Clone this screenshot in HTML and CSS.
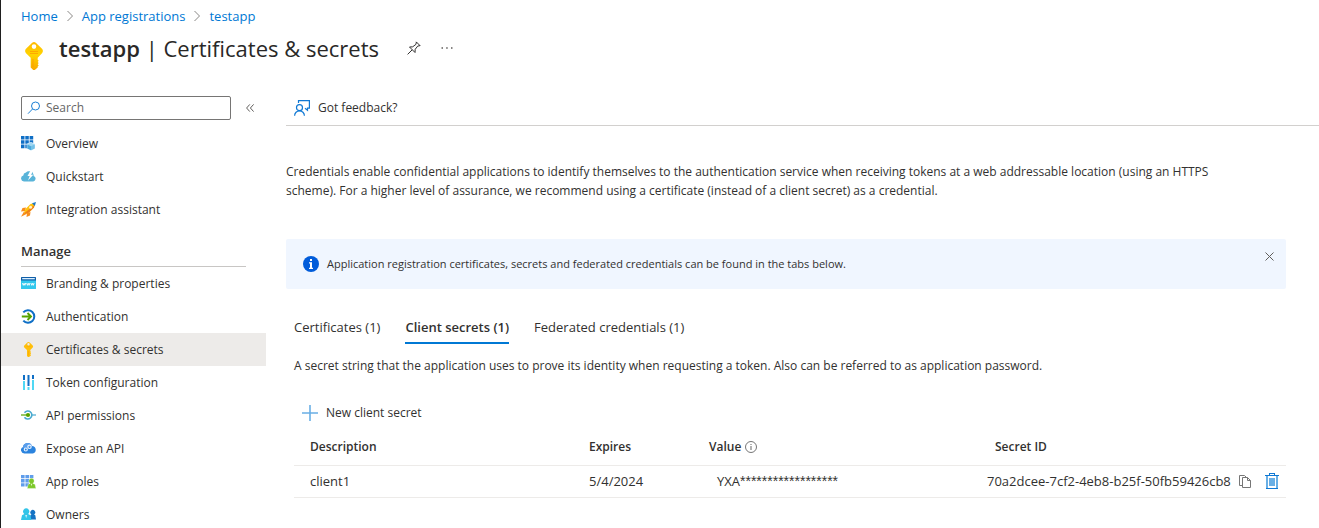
FILE: index.html
```html
<!DOCTYPE html>
<html lang="en">
<head>
<meta charset="utf-8">
<meta name="viewport" content="width=device-width, initial-scale=1">
<title>testapp | Certificates &amp; secrets</title>
<link rel="stylesheet" href="styles.css">
</head>
<body>
<div class="blade">
  <nav class="crumbs" aria-label="Breadcrumb">
    <a href="#">Home</a>
    <svg class="crumb-sep" viewBox="0 0 8 12"><path d="M1.500 1l5 5-5 5"/></svg>
    <a href="#">App registrations</a>
    <svg class="crumb-sep" viewBox="0 0 8 12"><path d="M1.500 1l5 5-5 5"/></svg>
    <a href="#">testapp</a>
  </nav>
  <header class="title-bar">
    <svg class="title-key" viewBox="0 0 18 28">
      <defs><linearGradient id="gold" x1="0" y1="0" x2="0" y2="1"><stop offset="0" stop-color="#ffb900"/><stop offset=".45" stop-color="#ffd400"/><stop offset="1" stop-color="#f8a800"/></linearGradient></defs>
      <path fill="url(#gold)" fill-rule="evenodd" d="M7.200.7Q9-.7 10.800.7L17 6.800Q18.800 9 17 11.200L12.700 15.700v2l1 1-1 1.200 1 1.200-1 1.200 1 1.200-1 1.100v1L9.800 28H8.200L5.700 25.500V15.700L1 11.200Q-.8 9 1 6.800zM9 2.300a2.300 2.300 0 1 0 0 4.600 2.300 2.300 0 0 0 0-4.600z"/>
      <path fill="#ff9300" opacity=".65" d="M5 9h8v.9H5zM5 11h8v.9H5zM7.500 17h1v8h-1z"/>
    </svg>
    <h1 class="title"><strong>testapp</strong> | Certificates &amp; secrets</h1>
    <button class="icon-btn pin" aria-label="Pin"><svg viewBox="0 0 14 14" width="14" height="14"><path d="M9.200.8l4 4M9.400 1l-.5 2.400-3.200 2.400-3.200.2 5.500 5.500.2-3.200 2.500-3.200 2.400-.5M5.200 8.800L.6 13.400"/></svg></button>
    <button class="icon-btn more" aria-label="More"><svg viewBox="0 0 12 4" width="12" height="4"><path d="M.5 1.200h1.500v1.500H.5zM5.200 1.200h1.500v1.500H5.200zM10 1.200h1.500v1.500H10z"/></svg></button>
  </header>
  <div class="columns">
    <aside class="side">
      <div class="search-row">
        <label class="search">
          <svg viewBox="0 0 14 14" width="14" height="14"><circle cx="8.500" cy="5" r="4"/><path d="M5.500 8L1 12.700"/></svg>
          <input type="text" placeholder="Search" aria-label="Search">
        </label>
        <button class="icon-btn collapse" aria-label="Collapse menu"><svg viewBox="0 0 8 8" width="8" height="8"><path d="M3.800.4L.6 4l3.200 3.600M7.600.4L4.400 4l3.200 3.600"/></svg></button>
      </div>
      <nav class="menu" aria-label="Resource menu">
        <a class="item" href="#"><svg viewBox="0 0 15 15"><path fill="#0f6fc6" d="M0 0h3.500v3.500H0zM4.300 0h3.500v3.500H4.300zM8.600 0h3.600v3.500H8.600zM0 4.300h3.500v3.500H0zM4.300 4.300h3.500v3.500H4.300zM8.600 4.300h3.600v3.500H8.600zM0 8.600h3.500v3.600H0zM4.300 8.600h3.500v3.600H4.300z"/><path fill="#9fd6f2" stroke="#fff" stroke-width=".5" d="M10 6.300l4 1.800v4.500L10 14.600l-4-2V8.100z"/><path fill="#4ba9dc" d="M6.300 8.500L10 10.200v4L6.300 12.400z"/><path fill="#73c1e8" d="M10 10.200l3.700-1.700v3.900L10 14.200z"/></svg>Overview</a>
        <a class="item" href="#"><svg viewBox="0 0 15 15"><path fill="#59b4d9" d="M3 12.500a3 3 0 0 1-.7-5.900A3.300 3.300 0 0 1 5 3.400a3.500 3.500 0 0 1 3-1.200h3.500L12 4.500a3.300 3.300 0 0 1 .6 2.400 2.900 2.900 0 0 1-.3 5.600z"/><path fill="#fff" d="M9.200 2L6.500 7h2.200L7 11.500 12.300 5.700H10L12.300 2z"/></svg>Quickstart</a>
        <a class="item" href="#"><svg viewBox="0 0 15 15"><path fill="#f78d1e" d="M5 5.500L1.500 6 0 9.500 4 9zM9.500 10L9 13.500 5.500 15 6 11zM3 9.500L0 14.800 5.500 12z"/><path fill="#ffc20e" d="M3 10.500L4.500 7 9.500 2 13.500 1 14 1.500 13 5.500 8 10.500 4.500 12z"/><path fill="#ef7e1a" d="M4.500 12l3.500-1.500 5-5 .5-2.500L3.500 11z"/><path fill="#1b77c5" d="M11 1.200L15 0 13.800 4z"/><circle cx="9.600" cy="5.300" r="1.500" fill="#fff2cc"/></svg>Integration assistant</a>
        <h2 class="group">Manage</h2>
        <a class="item" href="#"><svg viewBox="0 0 15 15"><path fill="#32c8ed" d="M0 4h15v8.500q0 .5-.5.5H.5Q0 13 0 12.500z"/><path fill="#0f5ea8" d="M.5 1h14q.5 0 .5.500V4.500H0V1.500Q0 1 .5 1z"/><path fill="#d8efff" d="M1.200 2h12.600v1.300H1.200z"/><path fill="none" stroke="#fff" stroke-width=".9" d="M1.500 7l.8 2.300.8-2 .8 2 .8-2.300M5.700 7l.8 2.300.8-2 .8 2 .8-2.300M9.900 7l.8 2.300.8-2 .8 2 .8-2.300"/></svg>Branding &amp; properties</a>
        <a class="item" href="#"><svg viewBox="0 0 15 15"><path fill="none" stroke="#0f6fc6" stroke-width="2" d="M2.300 3.300a6.300 6.300 0 1 1 0 8.400"/><path fill="none" stroke="#57a300" stroke-width="1.900" d="M.8 7.500h8.700M6.500 4l3.500 3.500L6.500 11"/></svg>Authentication</a>
        <a class="item selected" href="#" aria-current="page"><svg viewBox="0 0 15 15"><path fill="#ffbf0b" fill-rule="evenodd" d="M6.300.5q1.200-1 2.400 0l3 2.900q.8 1.100 0 2.200L9.300 8v1.200l.8.8-.8.800.8.800-.8.800.8.800-.8.800L8 15H7l-1-1V8L3.300 5.600q-.8-1.100 0-2.200zM7.500 1a1.200 1.200 0 1 0 0 2.400A1.200 1.200 0 0 0 7.500 1z"/><path fill="#f79b00" opacity=".6" d="M5.500 4.400h4v.7h-4zM7 9h.7v4.500H7z"/></svg>Certificates &amp; secrets</a>
        <a class="item" href="#"><svg viewBox="0 0 15 15"><path fill="#0f6fc6" d="M2 0h2v5H2zM6.500 0h2v11h-2zM11 0h2v4h-2z"/><path fill="#50d8f4" d="M2 6h2v9H2zM6.500 12h2v3h-2zM11 5h2v10h-2z"/></svg>Token configuration</a>
        <a class="item" href="#"><svg viewBox="0 0 15 15"><path fill="none" stroke="#48a9cf" stroke-width="1.600" d="M3.500 4.800a4 4 0 1 1 0 4.400"/><path fill="none" stroke="#48a9cf" stroke-width="1.200" d="M11 7h4"/><path fill="none" stroke="#57a300" stroke-width="1.200" d="M0 7h6"/><circle cx="7" cy="7" r="2.100" fill="#57a300"/></svg>API permissions</a>
        <a class="item" href="#"><svg viewBox="0 0 15 15"><path fill="#2b83de" d="M3.500 12.500A3.400 3.400 0 0 1 2 6 4.700 4.700 0 0 1 11 5a3.800 3.800 0 0 1 .8 7.500z"/><path fill="#5b9fec" d="M2 6a4.700 4.700 0 0 1 9-1L3 8z"/><g fill="none" stroke="#e5f1ff" stroke-width="1.200"><circle cx="4.800" cy="8.500" r="1.500"/><circle cx="8.500" cy="5.800" r="1.700"/></g></svg>Expose an API</a>
        <a class="item" href="#"><svg viewBox="0 0 15 15"><path fill="#5f9deb" d="M0 1h3.600v3.300H0zM4.400 1h3.600v3.300H4.400zM8.800 1h3.600v3.300H8.800zM0 5.100h3.600v3.300H0zM4.400 5.100h3.600v3.300H4.400zM8.800 5.100h3.600v3.300H8.800zM0 9.200h3.600v3.300H0zM4.400 9.200h3.600v3.300H4.400z"/><path fill="#7cc82a" stroke="#fff" stroke-width=".4" d="M6.200 14.400l1-4.200 2-.8a2.700 2.700 0 1 1 2.600 0l2.200.8 1 4.200z"/><path fill="#e6f7c8" d="M9.700 9.800h1.600l-.8 2.500z"/></svg>App roles</a>
        <a class="item" href="#"><svg viewBox="0 0 15 15"><path fill="#1473c4" d="M8.500 12.500L9.500 8l1-.6a2.400 2.400 0 1 1 2.600 0l1.200.8.700 4.300z"/><path fill="#32c4e8" d="M0 13l1-4.700 2.300-1.200a3.200 3.200 0 1 1 3.800 0l2.300 1.200 1 4.700z"/><path fill="#c5effa" d="M4.200 8h2l-1 3.200z"/></svg>Owners</a>
      </nav>
    </aside>
    <main class="main">
      <div class="commands">
        <button class="cmd"><svg viewBox="0 0 16 16" width="16" height="16"><path fill="none" stroke="#0f78d4" stroke-width="1.200" d="M4.500 3V.6h10.900v7.600h-1.900v2l-2.500-2M.6 15.700a4.700 4.700 0 0 1 9.800 0"/><circle cx="5.500" cy="7.700" r="3" fill="none" stroke="#0f78d4" stroke-width="1.200"/></svg>Got feedback?</button>
      </div>
      <div class="content">
        <p class="intro">Credentials enable confidential applications to identify themselves to the authentication service when receiving tokens at a web addressable location (using an HTTPS scheme). For a higher level of assurance, we recommend using a certificate (instead of a client secret) as a credential.</p>
        <div class="notice" role="status">
          <svg viewBox="0 0 16 16" width="16" height="16"><circle cx="8" cy="8" r="8" fill="#015cda"/><path fill="#fff" d="M7 3h2v2H7zM6 6.300h3v5.500h1V13H6v-1.200h1V7.500H6z"/></svg>
          <span class="notice-text">Application registration certificates, secrets and federated credentials can be found in the tabs below.</span>
          <button class="icon-btn dismiss" aria-label="Dismiss"><svg viewBox="0 0 9 9" width="9" height="9"><path d="M.5.5l8 8M8.500.5l-8 8"/></svg></button>
        </div>
        <section class="panel">
          <div class="tabs" role="tablist">
            <button class="tab" role="tab" aria-selected="false">Certificates (1)</button>
            <button class="tab active" role="tab" aria-selected="true">Client secrets (1)</button>
            <button class="tab" role="tab" aria-selected="false">Federated credentials (1)</button>
          </div>
          <p class="hint">A secret string that the application uses to prove its identity when requesting a token. Also can be referred to as application password.</p>
          <button class="cmd new-secret"><svg viewBox="0 0 16 16" width="16" height="16"><path fill="none" stroke="#69afe5" stroke-width="1.600" d="M8 0v16M0 8h16"/></svg>New client secret</button>
          <table class="secrets">
            <colgroup><col class="c-desc"><col class="c-exp"><col class="c-val"><col class="c-id"></colgroup>
            <thead><tr><th>Description</th><th>Expires</th><th><span class="with-icon">Value<svg viewBox="0 0 12 12" width="12" height="12"><circle cx="6" cy="6" r="5.500" fill="none" stroke="#666" stroke-width=".9"/><path fill="#666" d="M5.500 3h1v1h-1zM5.500 5h1v4h-1z"/></svg></span></th><th>Secret ID</th></tr></thead>
            <tbody><tr><td>client1</td><td>5/4/2024</td><td class="inset">YXA<span class="mask">******************</span></td><td class="id-cell"><div class="id-row"><span>70a2dcee-7cf2-4eb8-b25f-50fb59426cb8</span>
              <button class="icon-btn copy" aria-label="Copy to clipboard"><svg viewBox="0 0 12 13" width="12" height="13"><path fill="none" stroke="#767676" d="M3 10.500H.5V.5h5L7 2M3.500 2.500h5l3 3v7h-8zM8.500 2.500v3h3"/></svg></button>
              <button class="icon-btn trash" aria-label="Delete"><svg viewBox="0 0 14 16" width="14" height="16"><path fill="#69afe5" d="M1 3h2v12H1zM11 3h2v12h-2zM4 5h6v8H4z"/><path fill="#0f78d4" d="M0 2h14v1H0zM4 0h6v2H9V1H5v1H4zM1 15h12v1H1z"/></svg></button></div></td></tr></tbody>
          </table>
        </section>
      </div>
    </main>
  </div>
</div>
</body>
</html>
```
FILE: styles.css
```css
* { box-sizing: border-box; }
body {
  margin: 0;
  font-family: "Open Sans", "Noto Sans", sans-serif;
  font-size: 12px;
  line-height: 20px;
  color: #323130;
  background: #fff;
}
button { font: inherit; color: inherit; background: none; border: 0; padding: 0; cursor: pointer; }
a { text-decoration: none; color: inherit; }
h1, h2, p { margin: 0; }
svg { flex: none; display: block; }
.blade { height: 100vh; overflow: hidden; border-left: 1px solid #1f1f1f; }

.crumbs { display: flex; align-items: center; gap: 8px; padding: 6px 20px 0; font-size: 13px; color: #0078d4; }
.crumbs a { color: #0078d4; }
.crumb-sep { width: 8px; height: 12px; fill: none; stroke: #8a8886; }

.title-bar { display: flex; align-items: center; height: 44px; padding-left: 24px; }
.title-key { width: 18px; height: 28px; margin: 16px 16px 0 0; }
.title { font-size: 22px; line-height: 30px; font-weight: 400; color: #292827; }
.title strong { font-weight: 600; }
.icon-btn { display: flex; align-items: center; justify-content: center; }
.icon-btn svg { fill: none; stroke: #605e5c; }
.pin { margin-left: 28px; }
.pin svg { stroke: #323130; }
.more { margin-left: 20px; }
.more svg { fill: #605e5c; stroke: none; }

.columns { display: flex; align-items: flex-start; padding-top: 26px; }
.side { width: 265px; flex: none; }
.search-row { display: flex; align-items: center; gap: 15px; padding-left: 20px; margin-bottom: 7px; }
.search { display: flex; align-items: center; gap: 5px; width: 210px; height: 24px; padding: 0 5px; border: 1px solid #767574; border-radius: 2px; }
.search svg { fill: none; stroke: #1b7fd4; }
.search input { flex: 1; min-width: 0; border: 0; outline: 0; padding: 0; font: inherit; color: inherit; }
.search input::placeholder { color: #666; opacity: 1; }

.item { display: flex; align-items: center; gap: 10px; height: 33px; padding-left: 20px; }
.item svg { width: 15px; height: 15px; }
.item.selected { background: #edebe9; }
.group { margin: 14px 20px 0; height: 27px; border-bottom: 1px solid #c8c6c4; font-size: 13px; line-height: 22px; font-weight: 600; }

.main { flex: 1; min-width: 0; padding-left: 20px; }
.commands { height: 30px; padding: 2px 8px 0; border-bottom: 1px solid #d2d0ce; }
.cmd { display: flex; align-items: center; gap: 8px; }
.content { padding: 36px 33px 0 0; }
.intro { max-width: 960px; line-height: 19px; }
.notice { display: flex; align-items: center; height: 50px; margin-top: 39px; padding: 0 12px 0 17px; background: #f0f6ff; border-radius: 2px; }
.notice-text { flex: 1; margin-left: 8px; font-size: 11px; }
.dismiss { align-self: flex-start; margin-top: 13px; }
.panel { padding: 28px 0 0 8px; }
.tabs { display: flex; gap: 25px; font-size: 13px; }
.tab { height: 27px; padding-bottom: 6px; border-bottom: 2px solid transparent; }
.tab.active { font-weight: 600; border-color: #0078d4; }
.hint { margin-top: 12px; }
.new-secret { margin: 27px 8px 0; }
.secrets { width: 100%; margin-top: 7px; border-collapse: collapse; table-layout: fixed; }
.secrets th { height: 35px; padding: 0 0 0 16px; text-align: left; font-weight: 600; border-bottom: 1px solid #edebe9; }
.secrets td { height: 32px; padding: 0 0 0 16px; font-size: 13px; border-bottom: 1px solid #edebe9; }
.c-exp { width: 120px; }
.c-val { width: 286px; }
.c-id { width: 307px; }
.with-icon { display: flex; align-items: center; gap: 4px; }
.mask { font-family: "Liberation Sans", sans-serif; font-size: 14px; }
.secrets .inset { padding-left: 24px; }
.secrets .id-cell { padding: 0 7px 0 8px; }
.id-row { display: flex; align-items: center; }
.copy { margin-left: auto; margin-right: 14px; }
.trash svg { stroke: none; }
```
